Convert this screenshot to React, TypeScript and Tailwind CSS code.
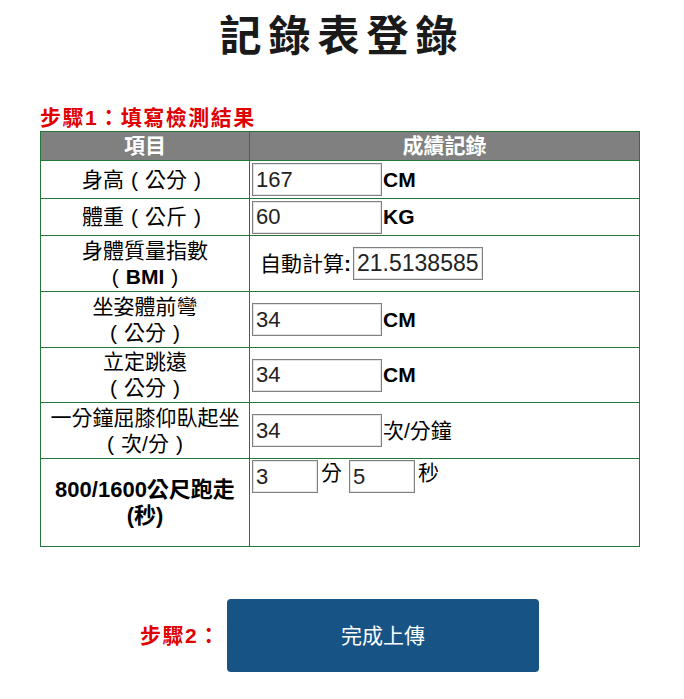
const rows = [
  { h: "h-[38px]", label: ["身高（公分）"], kind: "single", value: "167", unit: "CM", bold: true },
  { h: "h-[37px]", label: ["體重（公斤）"], kind: "single", value: "60", unit: "KG", bold: true },
  { h: "h-[56px]", label: ["身體質量指數", "（BMI）"], kind: "bmi", value: "21.51385851", unit: "", bold: false },
  { h: "h-[56px]", label: ["坐姿體前彎", "（公分）"], kind: "single", value: "34", unit: "CM", bold: true },
  { h: "h-[55px]", label: ["立定跳遠", "（公分）"], kind: "single", value: "34", unit: "CM", bold: true },
  { h: "h-[56px]", label: ["一分鐘屈膝仰臥起坐", "（次/分）"], kind: "single", value: "34", unit: "次/分鐘", bold: false },
];

const inputCls =
  "h-[33px] border border-[#808080] bg-white px-[3px] text-[22px] text-[#222] shadow-[inset_0_0_0_1px_#e4e4e4] outline-none";

// full-width parens drawn centred in their em box, as the original font does
const Label = ({ text }: { text: string }) => {
  const m = text.match(/^(.*)（(.*)）$/);
  if (!m) return <div>{text}</div>;
  return (
    <div>
      {m[1]}
      <span className="inline-block w-[1em] text-center">(</span>
      {m[2] === "BMI" ? <b>BMI</b> : m[2]}
      <span className="inline-block w-[1em] text-center">)</span>
    </div>
  );
};

const App = () => {
  return (
    <div className="min-h-[699px] w-[684px] bg-white font-['Liberation_Sans','Noto_Sans_CJK_TC',sans-serif] text-black">
      {/* Title */}
      <h1 className="pt-[11px] text-center text-[42px] font-bold leading-[52px] tracking-[7px] text-[#1a1a1a]">
        記錄表登錄
      </h1>

      {/* Step 1 */}
      <div className="ml-[40px] mt-[43px] w-[600px]">
        <div className="text-[21px] font-bold leading-[24px] tracking-[1.5px] text-[#e00000]">步驟1：填寫檢測結果</div>
        <table className="mt-[1px] w-[600px] table-fixed border-collapse border border-[#1f7a3a]">
          <colgroup>
            <col className="w-[209px]" />
            <col />
          </colgroup>
          <thead>
            <tr className="h-[29px] bg-[#808080] text-[21px] font-bold leading-[24px] text-white">
              <th className="border border-[#1f7a3a] p-0 text-center">項目</th>
              <th className="border border-[#1f7a3a] p-0 text-center">成績記錄</th>
            </tr>
          </thead>
          <tbody className="text-[21px] leading-[26px]">
            {rows.map((r) => (
              <tr key={r.label[0]} className={r.h}>
                <td className="border border-[#1f7a3a] p-0 text-center">
                  {r.label.map((l) => (
                    <Label key={l} text={l} />
                  ))}
                </td>
                <td className="border border-[#1f7a3a] px-[2px] py-0">
                  {r.kind === "bmi" ? (
                    <div className="flex items-center pl-[8px]">
                      <span>自動計算</span>
                      <b>:</b>
                      <input readOnly value={r.value} className={`${inputCls} ml-[2px] h-[32px] w-[130px] text-[23px]`} />
                    </div>
                  ) : (
                    <div className="flex items-center">
                      <input readOnly value={r.value} className={`${inputCls} w-[130px]`} />
                      <span className={r.bold ? "ml-[1px] font-bold" : "ml-[1px]"}>{r.unit}</span>
                    </div>
                  )}
                </td>
              </tr>
            ))}
            <tr className="h-[88px]">
              <td className="border border-[#1f7a3a] p-0 text-center text-[22px] font-bold">
                <div>800/1600公尺跑走</div>
                <div>(秒)</div>
              </td>
              <td className="border border-[#1f7a3a] px-[2px] pb-0 pt-[1px] align-top">
                <div className="flex items-start">
                  <input readOnly value="3" className={`${inputCls} w-[66px]`} />
                  <span className="ml-[3px]">分</span>
                  <input readOnly value="5" className={`${inputCls} ml-[7px] w-[66px]`} />
                  <span className="ml-[3px]">秒</span>
                </div>
              </td>
            </tr>
          </tbody>
        </table>
      </div>

      {/* Step 2 */}
      <div className="mt-[52px] flex items-center pl-[140px]">
        <span className="w-[87px] text-[21px] font-bold tracking-[1.5px] text-[#e00000]">步驟2：</span>
        <button className="h-[73px] w-[312px] rounded-[4px] bg-[#175385] text-[21px] text-white">完成上傳</button>
      </div>
    </div>
  );
};

export default App;
